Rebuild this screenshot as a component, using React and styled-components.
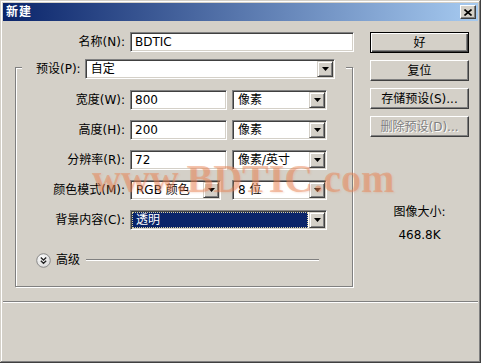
import React from 'react';
import styled, { createGlobalStyle } from 'styled-components';

const GlobalStyle = createGlobalStyle`
    html, body {
        margin: 0;
        padding: 0;
        background: #D4D0C8;
    }
    body {
        font-family: "DejaVu Sans", "Noto Sans CJK SC", sans-serif;
        font-size: 12px;
        line-height: 16px;
        color: #000;
    }
`;

const sizeRows = [
    { label: '宽度(W):', value: '800', unit: '像素' },
    { label: '高度(H):', value: '200', unit: '像素' },
    { label: '分辨率(R):', value: '72', unit: '像素/英寸' },
];

export default function App() {
    return (
        <>
            <GlobalStyle />
            <Window>
                <TitleBar>
                    <Title>新建</Title>
                    <CloseButton aria-label="关闭">
                        <svg width="8" height="7" viewBox="0 0 8 7">
                            <path d="M0.5 0.5 L7.5 6.5 M7.5 0.5 L0.5 6.5" stroke="#000" strokeWidth="1.6" fill="none" />
                        </svg>
                    </CloseButton>
                </TitleBar>

                <Body>
                    <LeftCol>
                        <NameRow>
                            <Label>名称(N):</Label>
                            <Field $w={224}>BDTIC</Field>
                        </NameRow>

                        <Group>
                            <Legend>
                                <span>预设(P):</span>
                                <Select grow value="自定" />
                            </Legend>

                            <Grid>
                                {sizeRows.map(row => (
                                    <React.Fragment key={row.label}>
                                        <Label>{row.label}</Label>
                                        <Field>{row.value}</Field>
                                        <Select value={row.unit} />
                                    </React.Fragment>
                                ))}
                                <Label>颜色模式(M):</Label>
                                <Select value="RGB 颜色" width={91} />
                                <Select value="8 位" />
                                <Label>背景内容(C):</Label>
                                <Select value="透明" span focused />
                            </Grid>

                            <Advanced>
                                <svg width="15" height="15" viewBox="0 0 15 15">
                                    <defs>
                                        <radialGradient id="knob" cx="0.4" cy="0.35" r="0.7">
                                            <stop offset="0" stopColor="#fff" />
                                            <stop offset="1" stopColor="#d8d8d8" />
                                        </radialGradient>
                                    </defs>
                                    <circle cx="7.5" cy="7.5" r="6.8" fill="url(#knob)" stroke="#8a8a8a" strokeWidth="1" />
                                    <path d="M4.8 4.6 L7.5 7 L10.2 4.6 M4.8 7.8 L7.5 10.2 L10.2 7.8" stroke="#222" strokeWidth="1.4" fill="none" />
                                </svg>
                                <span>高级</span>
                                <EtchLine />
                            </Advanced>
                        </Group>
                    </LeftCol>

                    <RightCol>
                        <Button $primary>好</Button>
                        <Button>复位</Button>
                        <Button>存储预设(S)...</Button>
                        <Button disabled>删除预设(D)...</Button>
                        <ImageSize>
                            <div>图像大小:</div>
                            <div>468.8K</div>
                        </ImageSize>
                    </RightCol>
                </Body>

                <Separator />
                <Footer />

                <Watermark>www.BDTIC.com</Watermark>
            </Window>
        </>
    );
}

function Select({ value, width, grow, span, focused }) {
    return (
        <SelectBox $w={width} $grow={grow} $span={span}>
            <SelectValue $focused={focused}>{value}</SelectValue>
            <ArrowButton>
                <svg width="7" height="4" viewBox="0 0 7 4">
                    <polygon points="0,0 7,0 3.5,4" fill="#000" />
                </svg>
            </ArrowButton>
        </SelectBox>
    );
}

/********************** Styled Components **********************/

const Window = styled.div`
    position: relative;
    box-sizing: border-box;
    width: 481px;
    height: 363px;
    padding: 3px;
    display: flex;
    flex-direction: column;
    background: #D4D0C8;
    box-shadow: inset -1px -1px 0 #404040, inset 1px 1px 0 #D4D0C8,
        inset -2px -2px 0 #808080, inset 2px 2px 0 #fff;
    overflow: hidden;
`;

const TitleBar = styled.div`
    height: 18px;
    flex: none;
    display: flex;
    align-items: center;
    justify-content: space-between;
    padding: 0 2px 0 3px;
    background: linear-gradient(to right, #0A246A, #A6CAF0);
`;

const Title = styled.span`
    color: #fff;
    font-weight: bold;
    font-size: 12px;
    letter-spacing: 1px;
`;

const CloseButton = styled.div`
    box-sizing: border-box;
    width: 16px;
    height: 14px;
    display: flex;
    align-items: center;
    justify-content: center;
    background: #D4D0C8;
    border: 1px solid;
    border-color: #fff #404040 #404040 #fff;
    box-shadow: inset -1px -1px 0 #808080;
`;

const Body = styled.div`
    box-sizing: border-box;
    height: 280px;
    flex: none;
    display: flex;
    gap: 16px;
    padding: 11px 9px 0 12px;
`;

const LeftCol = styled.div`
    width: 339px;
    display: flex;
    flex-direction: column;
`;

const NameRow = styled.div`
    display: flex;
    align-items: center;
    gap: 5px;
`;

const Label = styled.span`
    width: 110px;
    text-align: right;
    white-space: nowrap;
`;

const Field = styled.div`
    box-sizing: border-box;
    height: 20px;
    width: ${props => props.$w ? `${props.$w}px` : 'auto'};
    display: flex;
    align-items: center;
    padding: 0 4px;
    background: #fff;
    border: 1px solid;
    border-color: #808080 #fff #fff #808080;
    box-shadow: inset 1px 1px 0 #404040, inset -1px -1px 0 #D4D0C8;
`;

const Group = styled.div`
    box-sizing: border-box;
    width: 338px;
    margin-top: 15px;
    padding-bottom: 18px;
    border: 1px solid #808080;
    box-shadow: inset 1px 1px 0 #fff, 1px 1px 0 #fff;
`;

const Legend = styled.div`
    display: flex;
    align-items: center;
    gap: 4px;
    margin: -9px 6px 0 6px;
    padding: 0 11px 0 14px;
    background: #D4D0C8;
`;

const Grid = styled.div`
    display: grid;
    grid-template-columns: 109px 97px 95px;
    grid-auto-rows: 20px;
    column-gap: 5px;
    row-gap: 10px;
    align-items: center;
    margin-top: 11px;

    & > ${Label} {
        width: auto;
    }
`;

const SelectBox = styled.div`
    box-sizing: border-box;
    height: 20px;
    width: ${props => props.$w ? `${props.$w}px` : 'auto'};
    flex: ${props => props.$grow ? 1 : 'none'};
    grid-column: ${props => props.$span ? 'span 2' : 'auto'};
    display: flex;
    padding: 1px;
    background: #fff;
    border: 1px solid;
    border-color: #808080 #fff #fff #808080;
    box-shadow: inset 1px 1px 0 #404040, inset -1px -1px 0 #D4D0C8;
`;

const SelectValue = styled.div`
    box-sizing: border-box;
    flex: 1;
    display: flex;
    align-items: center;
    padding-left: 3px;
    margin-right: ${props => props.$focused ? '1px' : '0'};
    white-space: nowrap;
    background: ${props => props.$focused ? '#0A246A' : 'transparent'};
    color: ${props => props.$focused ? '#fff' : '#000'};
    border: 1px ${props => props.$focused ? 'dotted #d8d0a0' : 'solid transparent'};
`;

const ArrowButton = styled.div`
    box-sizing: border-box;
    width: 16px;
    height: 16px;
    flex: none;
    display: flex;
    align-items: center;
    justify-content: center;
    background: #D4D0C8;
    border: 1px solid;
    border-color: #D4D0C8 #404040 #404040 #D4D0C8;
    box-shadow: inset 1px 1px 0 #fff, inset -1px -1px 0 #808080;
`;

const Advanced = styled.div`
    display: flex;
    align-items: center;
    gap: 5px;
    height: 16px;
    margin: 22px 33px 0 20px;

    & > span {
        margin-right: 1px;
    }
`;

const EtchLine = styled.div`
    flex: 1;
    border-top: 1px solid #808080;
    border-bottom: 1px solid #fff;
`;

const RightCol = styled.div`
    width: 99px;
    display: flex;
    flex-direction: column;
    gap: 7px;
`;

const Button = styled.button`
    box-sizing: border-box;
    width: 99px;
    height: 21px;
    padding: 0;
    font: inherit;
    background: #D4D0C8;
    color: ${props => props.disabled ? '#808080' : '#000'};
    text-shadow: ${props => props.disabled ? '1px 1px 0 #fff' : 'none'};
    border: 1px solid;
    border-color: ${props => props.$primary ? '#000' : '#fff #404040 #404040 #fff'};
    box-shadow: ${props => props.$primary
        ? 'inset 1px 1px 0 #fff, inset -1px -1px 0 #404040, inset -2px -2px 0 #808080'
        : 'inset -1px -1px 0 #808080'};
`;

const ImageSize = styled.div`
    margin-top: 60px;
    display: flex;
    flex-direction: column;
    align-items: center;
    gap: 7px;
`;

const Separator = styled.div`
    flex: none;
    border-top: 1px solid #808080;
    border-bottom: 1px solid #fff;
`;

const Footer = styled.div`
    flex: 1;
`;

const Watermark = styled.div`
    position: absolute;
    left: 92px;
    top: 159px;
    font-family: "Liberation Serif", serif;
    font-weight: bold;
    font-size: 40px;
    line-height: 40px;
    white-space: nowrap;
    color: rgba(232, 128, 80, 0.45);
    text-shadow: 1px 1px 2px rgba(232, 128, 80, 0.2);
    pointer-events: none;
`;
